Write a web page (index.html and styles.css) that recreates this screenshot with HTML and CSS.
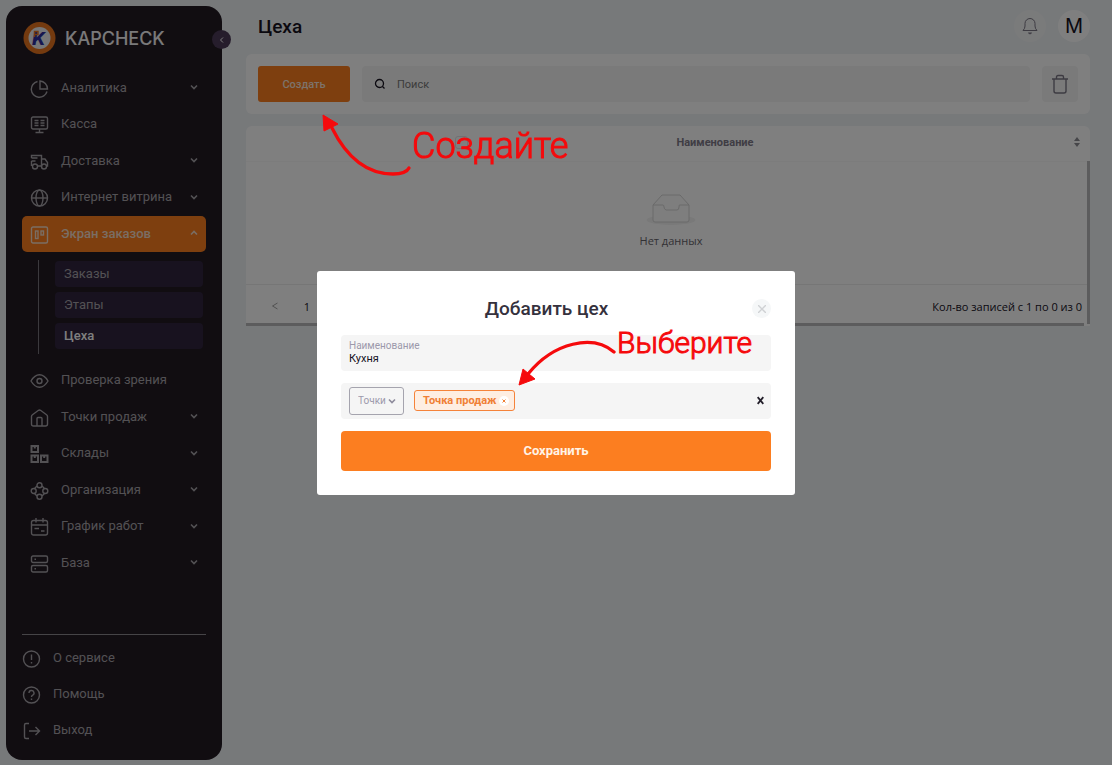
FILE: index.html
```html
<!DOCTYPE html>
<html lang="ru">
<head>
<meta charset="utf-8">
<meta name="viewport" content="width=device-width, initial-scale=1">
<title>Цеха — KAPCHECK</title>
<link rel="stylesheet" href="styles.css">
</head>
<body>
<svg class="sprite" aria-hidden="true">
  <symbol id="down" viewBox="0 0 8 8"><path d="M1 2.500l3 3 3-3"/></symbol>
</svg>
<div class="app">
  <aside class="sidebar">
    <div class="brand">
      <svg class="brand-logo" viewBox="0 0 32 32" aria-hidden="true">
        <circle cx="16" cy="16" r="16" fill="#e8741f"/>
        <circle cx="16" cy="16" r="11" fill="#eeeef0"/>
        <text class="logo-letter" x="8.500" y="22.500">K</text>
        <path d="M11 15V9.500h3.500v3h-3" fill="none" stroke="#e8741f" stroke-width="1.400"/>
      </svg>
      <span class="brand-name">KAPCHECK</span>
    </div>
    <button class="collapse" type="button" aria-label="Свернуть меню"><svg viewBox="0 0 8 8"><path d="M5 1.500L2.500 4 5 6.500"/></svg></button>
    <nav class="menu">
      <a class="item" href="#"><svg class="icon" viewBox="0 0 18 18"><path d="M7 1.500A8 8 0 1 0 16.500 11.500M9.500 1v8H17A8 8 0 0 0 9.500 1z"/></svg><span>Аналитика</span><svg class="chev"><use href="#down"/></svg></a>
      <a class="item" href="#"><svg class="icon" viewBox="0 0 18 18"><rect x="1" y="1" width="16" height="12" rx="1.500"/><path d="M9 13v3M5 16.500h8M4 4.500h4M4 7h4M4 9.500h4M10 4.500h4M10 7h4M10 9.500h4"/></svg><span>Касса</span></a>
      <a class="item" href="#"><svg class="icon" viewBox="0 0 18 18"><path d="M1 5V2.500h10V13H7M1 5h6M1 8h4M1 8v5M11 6h3.500L17 9.500V13h-1"/><circle cx="4.500" cy="13.500" r="2.500"/><circle cx="13.500" cy="13.500" r="2.500"/></svg><span>Доставка</span><svg class="chev"><use href="#down"/></svg></a>
      <a class="item" href="#"><svg class="icon" viewBox="0 0 18 18"><circle cx="9" cy="9" r="8"/><ellipse cx="9" cy="9" rx="3.500" ry="8"/><path d="M1 9h16"/></svg><span>Интернет витрина</span><svg class="chev"><use href="#down"/></svg></a>
      <div class="group">
        <a class="item item-active" href="#"><svg class="icon" viewBox="0 0 18 18"><rect x="1" y="1" width="16" height="16" rx="1.500"/><rect x="5" y="5" width="2.500" height="7.500"/><rect x="10.500" y="5" width="2.500" height="4"/></svg><span>Экран заказов</span><svg class="chev chev-up"><use href="#down"/></svg></a>
        <div class="sub">
          <a href="#">Заказы</a>
          <a href="#">Этапы</a>
          <a class="current" href="#">Цеха</a>
        </div>
      </div>
      <a class="item" href="#"><svg class="icon" viewBox="0 0 18 18"><path d="M.500 9C3 4.800 6 2.800 9 2.800S15 4.800 17.500 9C15 13.200 12 15.200 9 15.200S3 13.200.500 9z"/><circle cx="9" cy="9" r="2.500"/></svg><span>Проверка зрения</span></a>
      <a class="item" href="#"><svg class="icon" viewBox="0 0 18 18"><path d="M1 7.500Q1 6.500 2 5.700L8 1.300q1-.6 2 0l6 4.400q1 .8 1 1.800V15q0 2-2 2H3q-2 0-2-2zM6.500 17V9.500q0-1 1-1h3q1 0 1 1V17"/></svg><span>Точки продаж</span><svg class="chev"><use href="#down"/></svg></a>
      <a class="item" href="#"><svg class="icon icon-bold" viewBox="0 0 18 18"><path d="M1 1h6.500v6H1zM1 10.500h6.500v6.500H1zM10.500 10.500H17v6.500h-6.500zM4.300 1v2.500M4.300 10.500V13M13.700 10.500V13"/></svg><span>Склады</span><svg class="chev"><use href="#down"/></svg></a>
      <a class="item" href="#"><svg class="icon" viewBox="0 0 18 18"><circle cx="9" cy="3.200" r="2.500"/><circle cx="9" cy="14.800" r="2.500"/><circle cx="3.200" cy="9" r="2.500"/><circle cx="14.800" cy="9" r="2.500"/><path d="M6.500 4L4 6.500M11.500 4L14 6.500M6.500 14L4 11.500M11.500 14l2.500-2.500"/></svg><span>Организация</span><svg class="chev"><use href="#down"/></svg></a>
      <a class="item" href="#"><svg class="icon" viewBox="0 0 18 18"><rect x="1" y="2.500" width="16" height="14.500" rx="2"/><path d="M1 7h16M5.500 0v4.500M12.500 0v4.500M4 10.500h4.500M10.500 13H14"/></svg><span>График работ</span><svg class="chev"><use href="#down"/></svg></a>
      <a class="item" href="#"><svg class="icon" viewBox="0 0 18 18"><rect x="1" y="1" width="16" height="6.500" rx="1.500"/><rect x="1" y="10.500" width="16" height="6.500" rx="1.500"/><path d="M4 4.200h1.500M4 13.700h1.500"/></svg><span>База</span><svg class="chev"><use href="#down"/></svg></a>
    </nav>
    <div class="service">
      <a class="item" href="#"><svg class="icon" viewBox="0 0 18 18"><circle cx="9" cy="9" r="8"/><path d="M9 4.500v5.500M9 12v1.500"/></svg><span>О сервисе</span></a>
      <a class="item" href="#"><svg class="icon" viewBox="0 0 18 18"><circle cx="9" cy="9" r="8"/><path d="M6.500 7a2.500 2.500 0 1 1 3.700 2.200Q9 9.800 9 11M9 12.500V14"/></svg><span>Помощь</span></a>
      <a class="item" href="#"><svg class="icon" viewBox="0 0 18 18"><path d="M6.500 1.500h-3Q2 1.500 2 3v12q0 1.500 1.500 1.500h3M6.500 9H17M13 5l4 4-4 4"/></svg><span>Выход</span></a>
    </div>
  </aside>

  <main class="main">
    <header class="head">
      <h1>Цеха</h1>
      <button class="round round-bell" type="button" aria-label="Уведомления"><svg viewBox="0 0 16 18"><path d="M1 13.500h14Q13 11.500 13 9V6.500a5 5 0 0 0-10 0V9q0 2.500-2 4.500z"/><path d="M6.500 16h3L8 17z"/></svg></button>
      <button class="round round-user" type="button">M</button>
    </header>
    <section class="toolbar">
      <button class="create" type="button">Создать</button>
      <label class="search">
        <svg viewBox="0 0 12 12" aria-hidden="true"><circle cx="5.500" cy="5.500" r="4"/><path d="M8.500 8.500L10.500 10.500"/></svg>
        <input type="search" placeholder="Поиск" aria-label="Поиск">
      </label>
      <button class="trash" type="button" aria-label="Удалить"><svg viewBox="0 0 18 20"><path d="M3 5v12q0 2 2 2h8q2 0 2-2V5M1 5h16M5.500 5V3q0-1.500 1.500-1.500h4q1.500 0 1.500 1.500v2"/></svg></button>
    </section>
    <section class="list">
      <div class="list-view">
        <table>
          <thead><tr>
            <th class="col-check"><input type="checkbox" aria-label="Выбрать все"></th>
            <th class="col-name"><div><span>Наименование</span><svg viewBox="0 0 8 12"><path d="M4 1l3 4H1zM4 11L1 7h6z"/></svg></div></th>
          </tr></thead>
          <tbody><tr><td colspan="2">
            <svg class="empty" viewBox="0 0 50 32" aria-hidden="true"><ellipse cx="25" cy="26" rx="24.500" ry="5"/><path d="M7 11l9-10h18l9 10v15q0 2-2 2H9q-2 0-2-2z"/><path d="M7 11h10q1 0 1 2t2 3h11q2 0 2-3t1-2h9"/></svg>
            <p>Нет данных</p>
          </td></tr></tbody>
        </table>
        <div class="scroll-y"></div>
      </div>
      <footer class="pager">
        <button type="button" aria-label="Предыдущая страница"><svg viewBox="0 0 8 8"><path d="M6.500 1L1.500 4l5 3"/></svg></button>
        <button type="button">1</button>
        <span>Кол-во записей с 1 по 0 из 0</span>
      </footer>
      <div class="scroll-x"></div>
    </section>
  </main>
</div>

<div class="overlay">
  <div class="modal" role="dialog" aria-modal="true" aria-labelledby="modal-title">
    <div class="modal-head">
      <h2 id="modal-title">Добавить цех</h2>
      <button class="close" type="button" aria-label="Закрыть"><svg viewBox="0 0 8 8"><path d="M0 0l8 8M8 0L0 8"/></svg></button>
    </div>
    <div class="field">
      <label for="name">Наименование</label>
      <input id="name" type="text" value="Кухня">
    </div>
    <div class="points">
      <div class="picker">
        <select aria-label="Точки"><option>Точки</option></select>
        <svg class="chev"><use href="#down"/></svg>
      </div>
      <span class="tag">Точка продаж<button type="button" aria-label="Убрать точку"><svg viewBox="0 0 8 8"><path d="M2.500 2.500l3 3M5.500 2.500l-3 3"/></svg></button></span>
      <button class="clear" type="button" aria-label="Очистить"><svg viewBox="0 0 8 8"><path d="M1.500 1l5 6M6.500 1l-5 6"/></svg></button>
    </div>
    <button class="save" type="button">Сохранить</button>
    <div class="note note-pick">
      <svg viewBox="0 0 100 50"><path class="stroke" d="M97 14C76-4 37 4 11 36"/><path class="tip" d="M2 47L6 31l12 10z"/></svg>
      <span>Выберите</span>
    </div>
  </div>
</div>
<div class="note note-create">
  <svg viewBox="0 0 92 64"><path class="stroke" d="M12 15C27 45 48 61 73 61Q86 61 89 55"/><path class="tip" d="M3 2l15 9-14 7z"/></svg>
  <span>Создайте</span>
</div>
</body>
</html>
```
FILE: styles.css
```css
* { box-sizing: border-box; }
body {
  margin: 0;
  background: #eff2f5;
  color: #16121f;
  font-family: Roboto, "Liberation Sans", sans-serif;
  font-size: 13px;
}
button, input, select { font: inherit; color: inherit; margin: 0; }
button { border: 0; padding: 0; cursor: pointer; }
a { color: inherit; text-decoration: none; }
h1, h2, p { margin: 0; }
svg { fill: none; stroke: currentColor; flex: none; }
.sprite { display: none; }

.app { display: flex; gap: 24px; min-height: 100vh; padding: 6px 22px 5px 6px; }

/* Sidebar */
.sidebar {
  position: relative;
  display: flex;
  flex-direction: column;
  flex: none;
  width: 216px;
  padding: 16px 16px 12px;
  border-radius: 16px;
  background: #221a23;
  color: #a6a2a8;
}
.brand { display: flex; align-items: center; gap: 9px; padding-left: 1px; height: 32px; }
.brand-logo { width: 33px; height: 32px; stroke: none; }
.logo-letter { font: italic 800 18px Inter, sans-serif; fill: #2c2ea0; }
.brand-name { color: #f4f2f4; font: 500 18px Inter, sans-serif; }
.collapse {
  position: absolute;
  top: 24px;
  right: -9px;
  display: grid;
  place-items: center;
  width: 19px;
  height: 19px;
  border-radius: 50%;
  background: #4c3a58;
  color: #fff;
}
.collapse svg { width: 8px; height: 8px; }
.menu {
  display: flex;
  flex: 1;
  flex-direction: column;
  justify-content: space-between;
  padding: 16px 0 53px;
}
.item { display: flex; align-items: center; gap: 12px; height: 36px; padding: 0 8px 2px; }
.item span { flex: 1; }
.icon { width: 19px; height: 18px; margin-top: 3px; stroke-width: 1.4; }
.icon-bold { stroke-width: 2; }
.chev { width: 8px; height: 8px; stroke-width: 1.6; }
.chev-up { transform: rotate(180deg); }
.item-active {
  border-radius: 5px;
  background: #fc7e1f;
  color: #f4dcc8;
  font-weight: 500;
}
.group { padding-bottom: 8px; }
.sub {
  display: grid;
  gap: 5px;
  margin: 8px 3px 0 16px;
  padding: 1px 0 5px 16px;
  border-left: 1px solid #77727a;
}
.sub a { height: 26px; padding: 0 9px; border-radius: 4px; background: #30253f; line-height: 26px; }
.sub .current { color: #fff; font-weight: 500; }
.service { border-top: 1px solid #8d898f; padding-top: 5px; }
.service .item { padding: 0 0 2px; }

/* Page */
.main { flex: 1; min-width: 0; }
.head { display: flex; align-items: center; gap: 12px; height: 48px; padding-left: 12px; padding-bottom: 8px; }
.head h1 { flex: 1; font-size: 19px; font-weight: 500; }
.round { display: grid; place-items: center; width: 32px; height: 32px; border-radius: 50%; background: #fff; }
.round-bell { background: #f5f6f7; color: #7b7785; }
.round-bell svg { width: 16px; height: 18px; }
.round-user { font: 400 20px Inter, sans-serif; }
.toolbar { display: flex; gap: 12px; padding: 12px; border-radius: 6px; background: #fff; }
.create {
  width: 92px;
  height: 36px;
  border-radius: 3px;
  background: #fc7e1f;
  color: #fbe6d6;
  font-size: 11px;
  font-weight: 500;
}
.search { display: flex; flex: 1; align-items: center; gap: 11px; padding: 0 12px; border-radius: 4px; background: #f5f5f5; }
.search svg { width: 12px; height: 12px; stroke-width: 1.3; }
.search input { flex: 1; border: 0; padding: 0; background: none; font-size: 11px; outline: 0; }
.search input::placeholder { color: #777; opacity: 1; }
.trash { display: grid; place-items: center; width: 36px; height: 36px; border-radius: 4px; background: #f5f5f5; color: #7b7785; }
.trash svg { width: 18px; height: 20px; stroke-width: 1.4; }

.list { margin-top: 12px; border-radius: 6px 6px 0 0; background: #fff; font-family: "Open Sans", "Noto Sans", sans-serif; font-size: 11px; }
.list-view { position: relative; }
.list table { width: 100%; border-collapse: collapse; table-layout: fixed; }
.list th { height: 35px; padding: 0 0 2px; border-bottom: 1px solid #f8f8f8; color: #7e7a89; font-family: Roboto, sans-serif; }
.col-check { width: 51%; }
.col-check input {
  display: block;
  width: 13px;
  height: 13px;
  margin: 0 auto;
  appearance: none;
  border: 1px solid #e2e2e6;
  border-radius: 3px;
}
.col-name div { display: flex; justify-content: space-between; align-items: center; padding-right: 9px; }
.col-name svg { width: 8px; height: 12px; fill: #8d8d92; stroke: none; }
.list td { height: 123px; padding: 0 0 0 6px; text-align: center; color: #66646a; }
.empty { width: 50px; height: 32px; stroke: #d4d4d4; fill: #fdfdfd; }
.empty ellipse { stroke: none; fill: #f2f2f2; }
.list td p { margin-top: 4px; padding-bottom: 3px; line-height: 16px; }
.scroll-y { position: absolute; top: 35px; right: 0; bottom: -40px; width: 3px; background: #b8b8ba; }
.pager { display: flex; align-items: center; height: 39px; padding: 4px 8px 0 13px; border-top: 1px solid #ededed; }
.pager button { display: grid; place-items: center; width: 32px; height: 32px; background: none; }
.pager svg { width: 8px; height: 8px; color: #a3a3a3; }
.pager span { margin-left: auto; }
.scroll-x { height: 3px; margin-right: 6px; background: #b8b8ba; }

/* Dialog */
.overlay { position: fixed; inset: 0; display: grid; place-items: center; background: rgba(0, 0, 0, .5); }
.modal {
  position: relative;
  display: grid;
  gap: 12px;
  width: 478px;
  max-width: 100%;
  padding: 28px 24px 24px;
  border-radius: 3px;
  background: #fff;
}
.modal-head { display: flex; align-items: center; height: 20px; margin-bottom: 4px; }
.modal-head h2 { flex: 1; color: #35313d; font-size: 19px; font-weight: 500; text-align: center; }
.close { display: grid; place-items: center; width: 19px; height: 19px; border-radius: 50%; background: #f5f7f8; color: #cfd1d4; }
.close svg { width: 8px; height: 8px; stroke-width: 1.4; }
.field { display: grid; align-content: center; height: 36px; padding: 0 8px 2px; border-radius: 4px; background: #f5f5f5; }
.field label { color: #9c99ab; font-size: 10px; line-height: 13px; }
.field input { border: 0; padding: 0; background: none; font-size: 11px; line-height: 13px; height: 13px; outline: 0; }
.points { display: flex; align-items: center; gap: 10px; height: 36px; padding: 0 6px 0 8px; border-radius: 4px; background: #f5f5f5; }
.picker { display: grid; align-items: center; width: 55px; height: 28px; }
.picker select {
  grid-area: 1 / 1;
  width: 55px;
  height: 28px;
  padding: 0 0 0 8px;
  appearance: none;
  border: 1px solid #a5a4ae;
  border-radius: 3px;
  background: none;
  color: #9c99ab;
  font-size: 10px;
}
.picker .chev { grid-area: 1 / 1; justify-self: end; margin-right: 8px; color: #8e8b9c; pointer-events: none; }
.tag {
  display: flex;
  align-items: center;
  gap: 2px;
  height: 21px;
  padding: 0 5px 0 8px;
  border: 1px solid #f5833a;
  border-radius: 3px;
  background: #feeee2;
  color: #f08036;
  font-size: 11px;
  font-weight: 700;
}
.tag button { display: grid; place-items: center; width: 10px; height: 10px; border-radius: 50%; background: #fff; }
.tag svg { width: 8px; height: 8px; }
.clear { width: 9px; height: 9px; display: grid; margin-left: auto; background: none; color: #24202b; }
.clear svg { width: 9px; height: 9px; stroke-width: 1.6; }
.save { height: 40px; border-radius: 4px; background: #fc7e20; color: #fff3e6; font-size: 13px; font-weight: 700; }

/* Hand-drawn hints laid over the interface */
.note { position: absolute; display: flex; color: #f50a0c; font-weight: 300; pointer-events: none; }
.note span { -webkit-text-stroke: 1px currentColor; }
.note .stroke { stroke-width: 3.3; stroke-linecap: round; }
.note .tip { fill: currentColor; stroke-linejoin: round; }
.note-create { top: 113px; left: 320px; font-size: 36px; line-height: 66px; }
.note-create svg { width: 92px; height: 64px; }
.note-pick { top: 67px; left: 200px; font-size: 30px; line-height: 10px; }
.note-pick svg { width: 100px; height: 50px; }
```
